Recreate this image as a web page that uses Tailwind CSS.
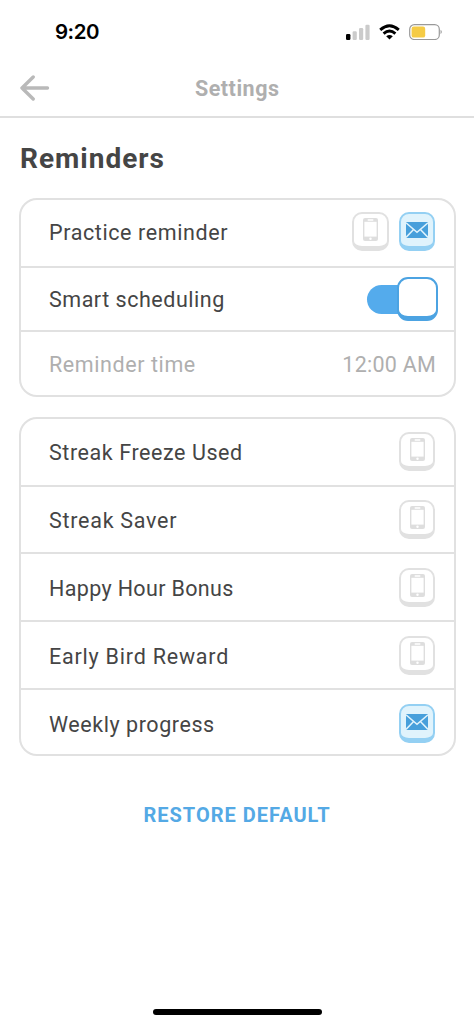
<!DOCTYPE html>
<html lang="en">
<head>
<meta charset="utf-8">
<title>Settings</title>
<script src="https://cdn.jsdelivr.net/npm/@tailwindcss/browser@4"></script>
</head>
<body class="bg-white">
<svg class="hidden">
  <symbol id="phone" viewBox="0 0 15 23">
    <rect width="15" height="23" rx="2" fill="#dedede"/>
    <rect x="1.4" y="3.8" width="12.2" height="14.8" fill="#fff"/>
    <rect x="4.5" y="1.3" width="6" height="1.4" rx="0.7" fill="#fff"/>
    <circle cx="7.5" cy="20.8" r="1.2" fill="#fff"/>
  </symbol>
  <symbol id="mail" viewBox="0 0 22 16">
    <rect width="22" height="16" fill="#479fdb"/>
    <path d="M0 0.8 L11 10.2 L22 0.8 M0 15.4 L7.6 7.6 M22 15.4 L14.4 7.6" fill="none" stroke="#e0f3fc" stroke-width="1.5"/>
  </symbol>
</svg>
<div class="flex h-[1025px] w-[474px] flex-col overflow-hidden bg-white font-['Roboto',sans-serif] text-[#454545]">
  <div class="flex h-[62px] items-center justify-between pt-px pl-[55px] pr-[31px]">
    <span class="font-['Inter',sans-serif] text-[20.5px] font-semibold leading-6 tracking-[-0.5px] text-black">9:20</span>
    <div class="flex items-center">
      <svg class="mr-[9px] h-4 w-6" viewBox="0 0 24 16">
        <rect x="0" y="10" width="4.4" height="6" rx="1.2" fill="#000"/>
        <rect x="6.6" y="7.2" width="4.2" height="8.8" rx="1.2" fill="#cbcbcb"/>
        <rect x="13" y="4" width="4.2" height="12" rx="1.2" fill="#cbcbcb"/>
        <rect x="19.4" y="0.8" width="4.2" height="15.2" rx="1.2" fill="#cbcbcb"/>
      </svg>
      <svg class="mr-[9px] h-4 w-[21px]" viewBox="0 0 21 16" fill="none" stroke="#000" stroke-width="2.9">
        <path d="M1.2 5.8 Q10.5 -2.4 19.8 5.8"/>
        <path d="M4.6 9.6 Q10.5 4.4 16.4 9.6"/>
        <path d="M7.2 12.2 Q10.5 9.6 13.8 12.2 L10.5 15.6 Z" fill="#000" stroke="none"/>
      </svg>
      <svg class="h-4 w-[34px]" viewBox="0 0 34 16">
        <rect x="0.7" y="0.7" width="29.6" height="14.8" rx="4.6" fill="#fff" stroke="#999" stroke-width="1.2"/>
        <rect x="2.6" y="2.6" width="13.6" height="11" rx="2.2" fill="#f5cb45"/>
        <path d="M31.6 5.8 Q33.8 8 31.6 10.2 Z" fill="#888"/>
      </svg>
    </div>
  </div>
  <header class="flex h-[56px] items-center border-b-2 border-[#dfdfdf] pl-[20px]">
    <svg class="-mt-[3px] h-[26px] w-[30px]" viewBox="0 0 30 26" fill="none" stroke="#b9b9b9" stroke-width="3.4" stroke-linecap="round" stroke-linejoin="round">
      <path d="M13.2 2 L2 13 L13.2 24 M2.5 13 H27.5"/>
    </svg>
    <h1 class="-mt-px ml-[145px] text-[21.5px] font-bold leading-7 tracking-[0.5px] text-[#afafaf]">Settings</h1>
  </header>
  <h2 class="mt-[22px] ml-[20px] h-[38px] text-[28px] font-bold leading-[38px] tracking-[1px]">Reminders</h2>
  <section class="mt-[20px] ml-[19px] flex h-[199px] w-[437px] flex-col rounded-[18px] border-2 border-[#e1e1e1] text-[21.5px] leading-[39px]">
    <div class="flex h-[68px] items-start justify-between border-b-2 border-[#e1e1e1] pt-[12px] pr-[19px] pl-[28px]">
      <span class="mt-px tracking-[0.6px]">Practice reminder</span>
      <div class="flex gap-[10px]">
        <div class="flex h-[39px] w-[37px] items-center justify-center rounded-[10px] border-2 border-b-[5px] border-[#e1e1e1]"><svg class="-mt-px h-[23px] w-[15px]"><use href="#phone"/></svg></div>
        <div class="flex h-[39px] w-[36px] items-center justify-center rounded-[10px] border-2 border-b-[5px] border-[#94d0f3] bg-[#e0f3fc]"><svg class="h-4 w-[22px]"><use href="#mail"/></svg></div>
      </div>
    </div>
    <div class="flex h-[64px] items-start justify-between border-b-2 border-[#e1e1e1] pt-[9px] pr-[16px] pl-[28px]">
      <span class="mt-[3px] tracking-[0.52px]">Smart scheduling</span>
      <div class="flex items-center">
        <div class="h-[29px] w-[40px] rounded-l-full bg-[#54abec]"></div>
        <div class="-ml-[10px] h-[44px] w-[41px] rounded-[11px] border-2 border-b-[5px] border-[#4ca3e2] bg-white"></div>
      </div>
    </div>
    <div class="flex flex-1 items-start justify-between pt-[13px] pr-[18px] pl-[28px] text-[#afafaf]">
      <span class="tracking-[0.58px]">Reminder time</span>
      <span class="tracking-[0.25px]">12:00 AM</span>
    </div>
  </section>
  <section class="mt-[20px] ml-[19px] flex h-[339px] w-[437px] flex-col rounded-[18px] border-2 border-[#e1e1e1] text-[21.5px] leading-[39px]">
    <div class="flex h-[68px] items-start justify-between border-b-2 border-[#e1e1e1] pt-[13px] pr-[19px] pl-[28px]">
      <span class="mt-px tracking-[0.57px]">Streak Freeze Used</span>
      <div class="flex h-[39px] w-[36px] items-center justify-center rounded-[10px] border-2 border-b-[5px] border-[#e1e1e1]"><svg class="-mt-px h-[23px] w-[15px]"><use href="#phone"/></svg></div>
    </div>
    <div class="flex h-[67px] items-start justify-between border-b-2 border-[#e1e1e1] pt-[13px] pr-[19px] pl-[28px]">
      <span class="mt-px tracking-[0.73px]">Streak Saver</span>
      <div class="flex h-[39px] w-[36px] items-center justify-center rounded-[10px] border-2 border-b-[5px] border-[#e1e1e1]"><svg class="-mt-px h-[23px] w-[15px]"><use href="#phone"/></svg></div>
    </div>
    <div class="flex h-[68px] items-start justify-between border-b-2 border-[#e1e1e1] pt-[14px] pr-[19px] pl-[28px]">
      <span class="mt-px tracking-[0.35px]">Happy Hour Bonus</span>
      <div class="flex h-[39px] w-[36px] items-center justify-center rounded-[10px] border-2 border-b-[5px] border-[#e1e1e1]"><svg class="-mt-px h-[23px] w-[15px]"><use href="#phone"/></svg></div>
    </div>
    <div class="flex h-[68px] items-start justify-between border-b-2 border-[#e1e1e1] pt-[14px] pr-[19px] pl-[28px]">
      <span class="mt-px tracking-[0.78px]">Early Bird Reward</span>
      <div class="flex h-[39px] w-[36px] items-center justify-center rounded-[10px] border-2 border-b-[5px] border-[#e1e1e1]"><svg class="-mt-px h-[23px] w-[15px]"><use href="#phone"/></svg></div>
    </div>
    <div class="flex flex-1 items-start justify-between pt-[14px] pr-[19px] pl-[28px]">
      <span class="mt-px tracking-[0.56px]">Weekly progress</span>
      <div class="flex h-[39px] w-[36px] items-center justify-center rounded-[10px] border-2 border-b-[5px] border-[#94d0f3] bg-[#e0f3fc]"><svg class="h-4 w-[22px]"><use href="#mail"/></svg></div>
    </div>
  </section>
  <button class="mt-[44px] self-center text-[20px] font-bold leading-[30px] tracking-[1px] text-[#54a9e5]">RESTORE DEFAULT</button>
  <div class="mt-auto mb-[10px] h-[6px] w-[169px] self-center rounded-full bg-black"></div>
</div>
</body>
</html>
